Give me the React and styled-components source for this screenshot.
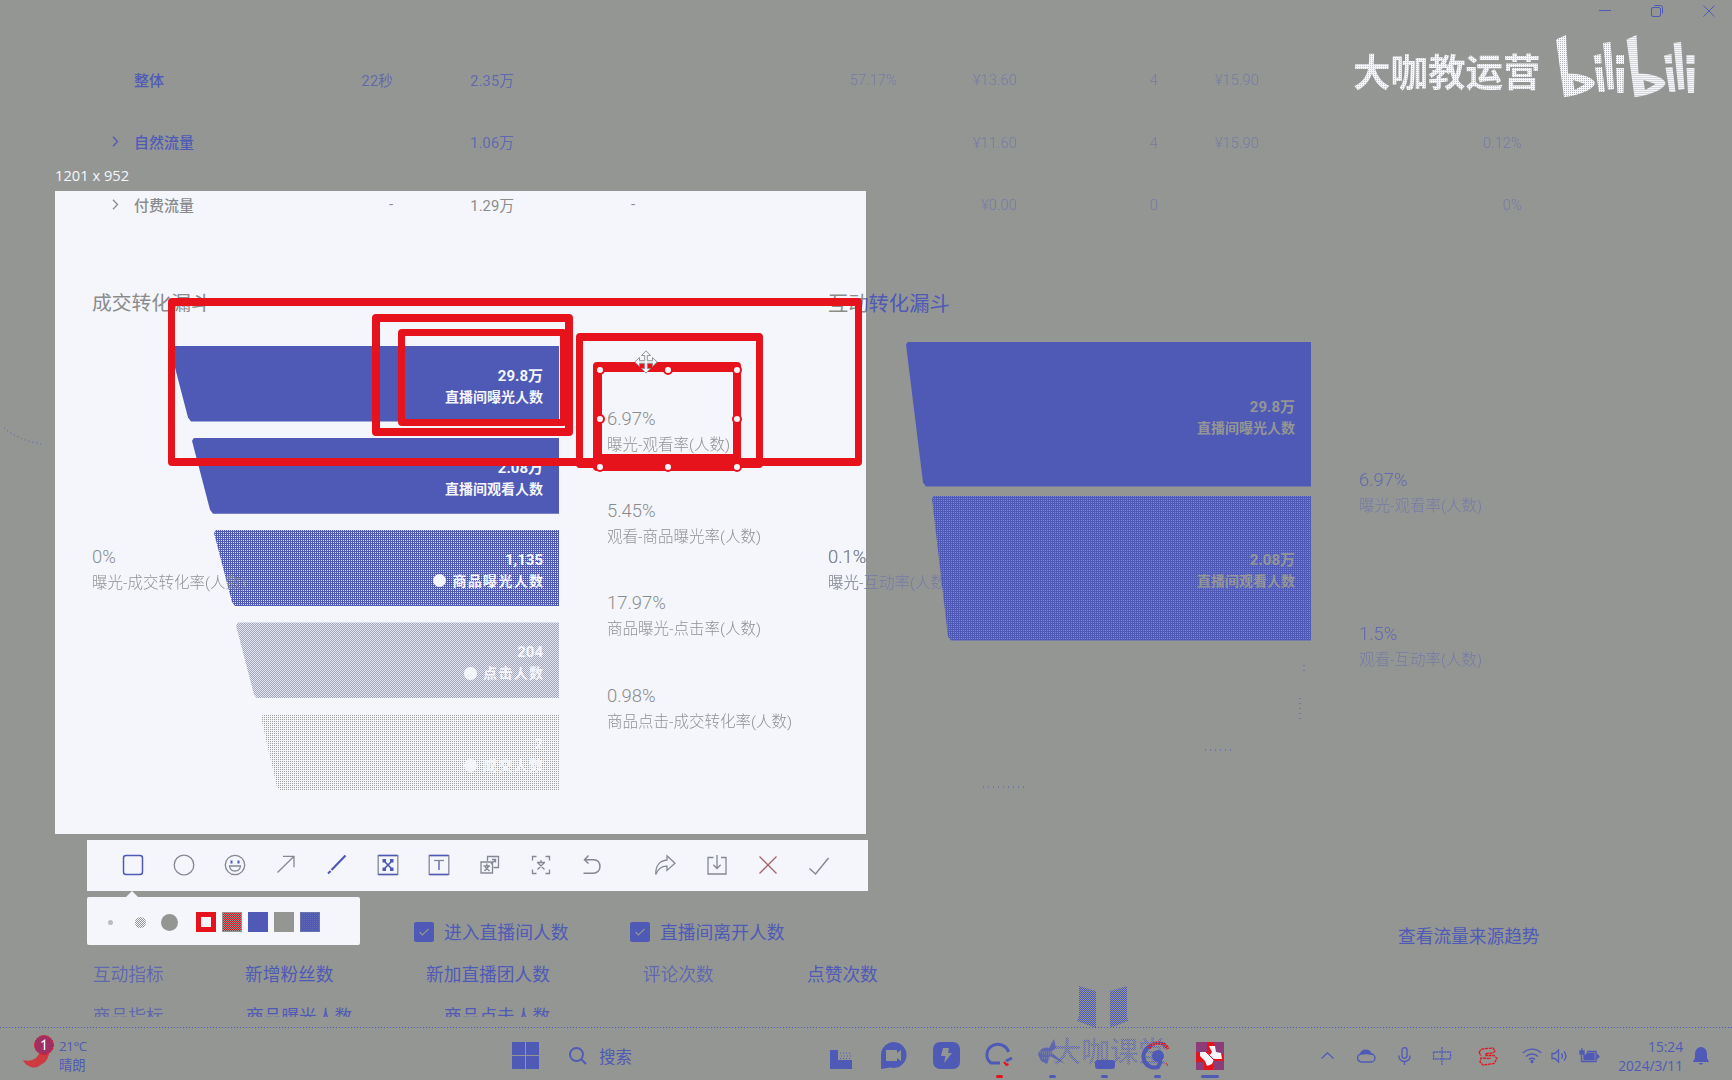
import React from 'react';
import styled, { createGlobalStyle, ThemeProvider } from 'styled-components';

const GRAY = '#949694';
const BLUE = '#4f5ab6';
const PAPER = '#f5f6fc';
const RED = '#e6131d';

const dots = (color, size = '2px 2px', at = '0 0') =>
  `conic-gradient(${color} 25%, transparent 0) ${at} / ${size}`;
const checker = (color, size = '2px 2px') =>
  `conic-gradient(${color} 25%, transparent 0 50%, ${color} 0 75%, transparent 0) 0 0 / ${size}`;

const Global = createGlobalStyle`
  * { box-sizing: border-box; }
  body { margin: 0; background: ${GRAY}; overflow: hidden; }
  svg { display: block; flex: none; overflow: visible; }
`;

const dimTheme = {
  bg: GRAY, text: BLUE, barText: GRAY, faint: 0.45, weak: 0.75,
  fills: { solid: BLUE, fine: `${dots('#858a9a')}, ${BLUE}` },
};
const litTheme = {
  bg: PAPER, text: '#8a8c8c', barText: PAPER, faint: 0.95, weak: 1,
  fills: {
    solid: BLUE,
    coarse: `${dots('#dcdef2')}, ${BLUE}`,
    haze: `${checker('#a3a6b6')}, #e3e5f3`,
    pale: `${dots('#9d9f9e')}, ${PAPER}`,
  },
};

const Screen = styled.div`
  position: relative;
  width: 1732px;
  height: 1080px;
  overflow: hidden;
  display: grid;
  grid-template-rows: 1027px 53px;
  background: ${GRAY};
  color: ${BLUE};
  font-family: Roboto, 'Noto Sans CJK SC', sans-serif;
  white-space: nowrap;
`;

/* ---------- report page ---------- */

const Report = styled.div`
  width: 1732px;
  height: 1017px;
  overflow: hidden;
  background: ${p => p.theme.bg};
  color: ${p => p.theme.text};
`;
const TitleBar = styled.header`
  height: 48px;
  display: flex;
  justify-content: flex-end;
  gap: 40px;
  padding: 5px 17px 0 0;
`;
const TableRow = styled.div`
  height: 62.5px;
  padding-left: 112px;
  display: grid;
  grid-template-columns: 200px 81px 121px 121px 262px 120px 141px 101px 263px;
  align-items: center;
`;
const NameCell = styled.div`
  display: flex;
  align-items: center;
  font-size: 15px;
  font-weight: 500;
`;
const ChevronSlot = styled.span`
  width: 22px;
`;
const ValueCell = styled.div`
  text-align: right;
  font-size: 14.8px;
  font-weight: ${p => (p.$faint ? 300 : 400)};
  padding-top: ${p => (p.$faint ? 2 : 0)}px;
  opacity: ${p => (p.$faint ? p.theme.faint : p.theme.weak)};
`;

const Funnels = styled.section`
  margin-top: 56px;
  padding-left: 92px;
  display: grid;
  grid-template-columns: 736px 1fr;
`;
const FunnelTitle = styled.h2`
  margin: 0;
  height: 24px;
  line-height: 24px;
  font-size: ${p => p.$size}px;
  font-weight: 400;
`;
const FunnelBody = styled.div`
  margin-top: 30px;
  height: 448px;
  display: grid;
  grid-template-columns: 78px ${p => p.$bars}px 1fr;
`;
const Total = styled.div`
  align-self: center;
  width: 0;
  position: relative;
  z-index: 1;
`;
const Bars = styled.div`
  display: flex;
  flex-direction: column;
  align-items: flex-end;
  gap: ${p => p.$gap}px;
  margin-top: ${p => p.$lift || 0}px;
`;
const Bar = styled.div`
  flex: none;
  width: ${p => p.$w}px;
  height: ${p => p.$h}px;
  padding-right: 16px;
  padding-top: ${p => p.$shift || 0}px;
  display: flex;
  flex-direction: column;
  justify-content: center;
  align-items: flex-end;
  color: ${p => p.theme.barText};
  background: ${p => p.theme.fills[p.$fill]};
  clip-path: polygon(0 3px, 2px 0, 100% 0, 100% 100%, ${p => p.$cut + 1}px 100%, ${p => p.$cut - 2}px calc(100% - 4px));
`;
const BarValue = styled.div`
  font-size: 15px;
  line-height: 21px;
  font-weight: 700;
`;
const BarName = styled.div`
  display: flex;
  align-items: center;
  font-size: 14px;
  line-height: 20px;
  font-weight: 700;
  letter-spacing: ${p => (p.$mark ? '1.3px' : '0')};
  margin-right: ${p => (p.$mark ? '-1.3px' : '0')};
`;
const Mark = styled.i`
  width: 13px;
  height: 13px;
  margin-right: 6px;
  border-radius: 50%;
  background: currentColor;
`;
const Rates = styled.div`
  padding: ${p => p.$top}px 0 0 48px;
  display: flex;
  flex-direction: column;
`;
const Rate = styled.div`
  height: ${p => p.$h}px;
  display: flex;
  flex-direction: column;
  justify-content: center;
`;
const RateValue = styled.div`
  font-size: 18.4px;
  line-height: 26px;
  font-weight: 300;
  opacity: ${p => p.theme.weak};
`;
const RateName = styled.div`
  font-size: 15.5px;
  line-height: 26px;
  font-weight: 300;
  opacity: ${p => p.theme.faint};
`;

const Options = styled.div`
  margin-top: 121px;
  height: 30px;
  padding-left: 414px;
  display: grid;
  grid-template-columns: 216px 768px 1fr;
  align-items: center;
  font-size: 17.8px;
  line-height: 24px;
`;
const Option = styled.label`
  display: flex;
  align-items: center;
  gap: 10px;
`;
const OptionText = styled.span`
  padding-top: 2px;
`;
const Check = styled.span`
  width: 20px;
  height: 20px;
  border-radius: 2px;
  background: ${BLUE};
  display: grid;
  place-items: center;
`;
const TrendLink = styled.a`
  padding-top: 10px;
  font-size: 17.7px;
`;
const Metrics = styled.div`
  height: ${p => p.$h}px;
  margin-top: ${p => p.$top || 0}px;
  padding-left: 93px;
  display: grid;
  grid-template-columns: 152px 181px 217px 164px 1fr;
  align-items: center;
  font-size: 17.7px;
`;
const Metric = styled.span`
  padding-left: ${p => p.$indent || 0}px;
  opacity: ${p => (p.$soft ? 0.75 : 1)};
`;

const Chevron = () => (
  <svg width="7" height="11" viewBox="0 0 7 11" fill="none" stroke="currentColor" strokeWidth="1.3">
    <path d="M1 .8 5.5 5.5 1 10.2" />
  </svg>
);

const dimRows = [
  { name: '整体', cells: ['22秒', '2.35万', '', '57.17%', '¥13.60', '4', '¥15.90', ''] },
  { name: '自然流量', open: true, cells: ['', '1.06万', '', '', '¥11.60', '4', '¥15.90', '0.12%'] },
  { cells: ['', '', '', '', '¥0.00', '0', '', '0%'] },
];
const litRows = [
  { cells: [] },
  { cells: [] },
  { name: '付费流量', open: true, cells: ['-', '1.29万', '-'] },
];

const dealBars = [
  { w: 389, cut: 20, fill: 'solid', value: '29.8万', name: '直播间曝光人数', shift: 6 },
  { w: 367, cut: 20, fill: 'solid', value: '2.08万', name: '直播间观看人数', shift: 6 },
  { w: 345, cut: 20, fill: 'coarse', value: '1,135', name: '商品曝光人数', mark: true, shift: 4 },
  { w: 323, cut: 20, fill: 'haze', value: '204', name: '点击人数', mark: true, shift: 5 },
  { w: 298, cut: 18, fill: 'pale', value: '2', name: '成交人数', mark: true, shift: 4 },
];
const dealRates = [
  ['6.97%', '曝光-观看率(人数)'],
  ['5.45%', '观看-商品曝光率(人数)'],
  ['17.97%', '商品曝光-点击率(人数)'],
  ['0.98%', '商品点击-成交转化率(人数)'],
];
const talkBars = [
  { w: 405, cut: 19, fill: 'solid', value: '29.8万', name: '直播间曝光人数', shift: 6 },
  { w: 379, cut: 18, fill: 'fine', value: '2.08万', name: '直播间观看人数', shift: 4 },
];
const talkRates = [
  ['6.97%', '曝光-观看率(人数)'],
  ['1.5%', '观看-互动率(人数)'],
];

function FunnelBars({ items, h, gap, lift }) {
  return (
    <Bars $gap={gap} $lift={lift}>
      {items.map(b => (
        <Bar key={b.name} $w={b.w} $h={h} $cut={b.cut} $fill={b.fill} $shift={b.shift}>
          <BarValue>{b.value}</BarValue>
          <BarName $mark={b.mark}>{b.mark && <Mark />}{b.name}</BarName>
        </Bar>
      ))}
    </Bars>
  );
}

function FunnelRates({ items, h, top }) {
  return (
    <Rates $top={top}>
      {items.map(([v, n]) => (
        <Rate key={n} $h={h}><RateValue>{v}</RateValue><RateName>{n}</RateName></Rate>
      ))}
    </Rates>
  );
}

function TrafficTable({ rows }) {
  return rows.map((r, n) => (
    <TableRow key={n}>
      <NameCell><ChevronSlot>{r.open && <Chevron />}</ChevronSlot>{r.name}</NameCell>
      {r.cells.map((c, i) => <ValueCell key={i} $faint={i > 2}>{c}</ValueCell>)}
    </TableRow>
  ));
}

const Tick = () => (
  <svg width="10" height="8" viewBox="0 0 10 8" fill="none" stroke={GRAY} strokeWidth="1.2"><path d="M.5 4 3.5 7 9.5.8" /></svg>
);

function TalkFunnel({ children }) {
  return (
    <div>
      <FunnelTitle $size={20.3}>互动转化漏斗</FunnelTitle>
      <FunnelBody $bars={405}>
        <Total><RateValue>0.1%</RateValue><RateName>曝光-互动率(人数)</RateName></Total>
        {children}
      </FunnelBody>
    </div>
  );
}

function DimmedReport() {
  return (
    <Report>
      <TitleBar>
        <svg width="12" height="12" fill="none" stroke="currentColor"><path d="M0 5.5h12" /></svg>
        <svg width="12" height="12" fill="none" stroke="currentColor">
          <rect x=".5" y="2.5" width="9" height="9" rx="1.5" /><path d="M3.5 .5h6q2 0 2 2v6" />
        </svg>
        <svg width="12" height="12" fill="none" stroke="currentColor"><path d="M.5.5l11 11M11.5.5l-11 11" /></svg>
      </TitleBar>
      <TrafficTable rows={dimRows} />
      <Funnels>
        <div />
        <TalkFunnel>
          <FunnelBars items={talkBars} h={145} gap={9} lift={-4} />
          <FunnelRates items={talkRates} h={154} top={70} />
        </TalkFunnel>
      </Funnels>
      <Options>
        <Option><Check><Tick /></Check><OptionText>进入直播间人数</OptionText></Option>
        <Option><Check><Tick /></Check><OptionText>直播间离开人数</OptionText></Option>
        <TrendLink>查看流量来源趋势</TrendLink>
      </Options>
      <Metrics $top={6} $h={44}>
        <Metric $soft>互动指标</Metric>
        <Metric>新增粉丝数</Metric>
        <Metric>新加直播团人数</Metric>
        <Metric $soft>评论次数</Metric>
        <Metric>点赞次数</Metric>
      </Metrics>
      <Metrics $h={40}>
        <Metric $soft>商品指标</Metric>
        <Metric $indent={1}>商品曝光人数</Metric>
        <Metric $indent={18}>商品点击人数</Metric>
      </Metrics>
    </Report>
  );
}

function SelectedReport() {
  return (
    <Report>
      <TitleBar />
      <TrafficTable rows={litRows} />
      <Funnels>
        <div>
          <FunnelTitle $size={19.8}>成交转化漏斗</FunnelTitle>
          <FunnelBody $bars={389}>
            <Total><RateValue>0%</RateValue><RateName>曝光-成交转化率(人数)</RateName></Total>
            <FunnelBars items={dealBars} h={76} gap={16.3} />
            <FunnelRates items={dealRates} h={92.3} top={40} />
          </FunnelBody>
        </div>
        <TalkFunnel />
      </Funnels>
    </Report>
  );
}

/* ---------- capture overlay ---------- */

const SizeLabel = styled.div`
  position: absolute;
  left: 55px;
  top: 164px;
  font: 14.7px/22px 'Open Sans', sans-serif;
  color: ${PAPER};
`;
const Selection = styled.div`
  position: absolute;
  left: 55px;
  top: 191px;
  width: 811px;
  height: 643px;
  overflow: hidden;
`;
const SelectionShift = styled.div`
  margin: -191px 0 0 -55px;
`;
const RedBox = styled.div`
  position: absolute;
  left: ${p => p.$x}px;
  top: ${p => p.$y}px;
  width: ${p => p.$w}px;
  height: ${p => p.$h}px;
  border: solid ${RED};
  border-width: ${p => p.$b};
  border-radius: 4px;
`;
const Handle = styled.i`
  position: absolute;
  left: ${p => p.$x - 5}px;
  top: ${p => p.$y - 5}px;
  width: 10px;
  height: 10px;
  border: 2px solid ${RED};
  border-radius: 50%;
  background: ${PAPER};
`;
const CursorSlot = styled.div`
  position: absolute;
  left: 634px;
  top: 350px;
`;
const boxes = [
  { x: 168, y: 298, w: 694, h: 168, b: '8px 7px' },
  { x: 372, y: 314, w: 201, h: 122, b: '8px' },
  { x: 398, y: 329, w: 169, h: 97, b: '7px' },
  { x: 576, y: 333, w: 187, h: 135, b: '8px 7.5px 10px' },
  { x: 593, y: 362, w: 148, h: 109, b: '10px 8px 17px 9px' },
];
const handles = [600, 668, 737].flatMap(x => [370, 419, 467].map(y => [x, y]))
  .filter(([x, y]) => !(x === 668 && y === 419));

const MoveCursor = () => (
  <svg width="24" height="24" viewBox="0 0 24 24" fill={PAPER} stroke={GRAY} strokeWidth="1">
    <path d="M12 .8 16.5 5.5H13.3V10.7H18.5V7.5L23.2 12 18.5 16.5V13.3H13.3V18.5H16.5L12 23.2 7.5 18.5H10.7V13.3H5.5V16.5L.8 12 5.5 7.5V10.7H10.7V5.5H7.5Z" />
  </svg>
);

const Toolbar = styled.div`
  position: absolute;
  left: 87px;
  top: 840px;
  width: 781px;
  height: 51px;
  padding: 0 0 2px 20px;
  display: flex;
  align-items: center;
  background: ${PAPER};
`;
const Tool = styled.button`
  width: 51.1px;
  height: 49px;
  margin-left: ${p => p.$space || 0}px;
  padding: 0;
  border: 0;
  background: none;
  display: grid;
  place-items: center;
  color: ${p => p.$color || '#858893'};
`;
const ToolSvg = ({ children }) => (
  <svg width="22" height="22" viewBox="0 0 22 22" fill="none" stroke="currentColor" strokeWidth="1.3">{children}</svg>
);

const tools = [
  { id: 'rect', color: BLUE, art: <rect x="1.5" y="1.5" width="19" height="19" rx="2.5" strokeWidth="1.5" /> },
  { id: 'circle', art: <circle cx="11" cy="11" r="9.8" /> },
  { id: 'smile', art: <><circle cx="11" cy="11" r="9.7" /><path d="M5.5 12h11c-.4 3.4-2.6 5-5.5 5s-5.100-1.600-5.500-5z" /><path d="M7.500 6.500v3M14.500 6.500v3" stroke={BLUE} strokeWidth="2" /></> },
  { id: 'arrow', art: <path d="M2.500 18.500 18.800 2.500M8 2.300h11v11" /> },
  { id: 'brush', color: BLUE, art: <><path d="M5.500 16 19.500 1.500" strokeWidth="2.200" /><path d="M2 19.500 4.600 17" strokeWidth="2" /></> },
  { id: 'mosaic', art: <><rect x="1.200" y="1.500" width="19.600" height="19" /><path d="M1.500 1.500h19M1.500 20.500h19" stroke={BLUE} /><path fill={BLUE} stroke="none" d="M5.500 5h3.500v3.500h-3.500zM13 5h3.500v3.500H13zM5.500 13.500h3.500V17h-3.500zM13 13.500h3.500V17H13z" /><path d="M8 8l6 6M14 8l-6 6" stroke={BLUE} strokeWidth="1.700" /></> },
  { id: 'text', art: <><rect x="1.200" y="1.500" width="19.600" height="19" /><path d="M1.500 1.500h19M1.500 20.500h19M11 7v9" stroke={BLUE} /><path d="M6 6.500h10" /></> },
  { id: 'translate', art: <><path d="M8.500 7V2.500h11v11h-5M2 8h11.500v11H2zM7.800 9.500V12M4.500 12h6.500M10 12l-4.500 5M6 13l4.500 4M13 5.500h3.500v3M12 10l4-3.500" /></> },
  { id: 'ocr', art: <><path d="M2.500 6.500v-4h4M15.500 2.500h4v4M19.500 15.500v4h-4M6.500 19.500h-4v-4M11 6v2.500M7 8.500h8M14 9l-6.500 6.500M8 9l6.500 6.500" /></> },
  { id: 'undo', art: <path d="M7.500 1.500 3.500 5.700 7.500 9.500M3.500 5.700h9.300c8.200 0 8.200 13.500 0 13.500H2.500" strokeWidth="1.500" /> },
  { id: 'share', space: 22, art: <path d="M13 1.800 21 9.200l-8 7.200v-4.200C8.500 12 4 15 1.700 20.500 1.500 11 6.500 6.500 13 6z" /> },
  { id: 'save', art: <path d="M7.500 3.500h-5.500v16.500h18V3.500h-5M11 1v13.500M7.300 10.800 11 14.500l3.700-3.700" /> },
  { id: 'cancel', color: '#a5656b', art: <path d="M2.500 2.500l17 17M19.500 2.500l-17 17" /> },
  { id: 'done', art: <path d="M1.500 14.500 7.500 20 20.500 4" strokeWidth="1.400" /> },
];

const StylePanel = styled.div`
  position: absolute;
  left: 87px;
  top: 897px;
  width: 273px;
  height: 48px;
  padding: 2px 0 0 21px;
  border-radius: 2px;
  background: ${PAPER};
  display: flex;
  align-items: center;
  &::before {
    content: '';
    position: absolute;
    left: 39px;
    top: -6px;
    border: 6px solid transparent;
    border-top: 0;
    border-bottom-color: ${PAPER};
  }
`;
const Sizes = styled.div`
  width: 88px;
  height: 20px;
  display: grid;
  grid-template-columns: 26.5px 26.5px 17px;
  align-items: center;
`;
const Dot = styled.i`
  width: ${p => p.$d}px;
  height: ${p => p.$d}px;
  border-radius: 50%;
  background: ${p => p.$bg};
`;
const Swatches = styled.div`
  display: flex;
  gap: 6.2px;
`;
const Swatch = styled.i`
  width: 19.8px;
  height: 20px;
  background: ${p => p.$bg};
  border: ${p => p.$edge || 'none'};
`;

/* ---------- watermarks ---------- */

const Brand = styled.div`
  position: absolute;
  left: 1353px;
  top: 25px;
  height: 85px;
  display: flex;
  align-items: center;
`;
const BrandName = styled.div`
  width: 187px;
  padding-top: 5px;
  font: 700 37.5px/50px 'Noto Sans CJK SC', sans-serif;
  color: transparent;
  background: ${dots('#c9cbcd')}, ${PAPER};
  -webkit-background-clip: text;
  background-clip: text;
`;
const BiliHalf = ({ x }) => (
  <g transform={`translate(${x} 0)`}>
    <path fillRule="evenodd" d="M16 14.5 26 10 28 48.5C43 48.5 54 53 55 58 54 64 40 70.5 24 72ZM33 55 34.5 65 45 59Z" />
    <path d="M53.5 30.5 61 29 61.5 38.5 55 38.8ZM55 42.5 62 42 65 67 59 67ZM63 18 70.5 17 74 64 68 65ZM76 30 84 30 84 39 76 39ZM76 43 84 43 83.5 68 77.5 68Z" />
  </g>
);
const BiliLogo = () => (
  <svg width="170" height="85" viewBox="0 0 170 85">
    <defs>
      <pattern id="grain" width="2" height="2" patternUnits="userSpaceOnUse">
        <rect width="2" height="2" fill={PAPER} /><rect width="1" height="1" fill="#b5b7b8" />
      </pattern>
    </defs>
    <g fill="url(#grain)"><BiliHalf x={0} /><BiliHalf x={70.5} /></g>
  </svg>
);
const Course = styled.div`
  position: absolute;
  left: 1053px;
  top: 985px;
  width: 114px;
  display: flex;
  flex-direction: column;
  gap: 3px;
`;
const BookSlot = styled.div`
  padding-left: 23px;
`;
const CourseName = styled.div`
  font: 500 28.5px/36px 'Noto Sans CJK SC', sans-serif;
  color: transparent;
  background: ${checker(BLUE)};
  -webkit-background-clip: text;
  background-clip: text;
  opacity: 0.75;
`;
const Book = () => (
  <svg width="54" height="44" viewBox="0 0 54 44">
    <defs>
      <pattern id="weave" width="2" height="2" patternUnits="userSpaceOnUse">
        <rect width="1" height="1" fill={BLUE} /><rect x="1" y="1" width="1" height="1" fill={BLUE} />
      </pattern>
    </defs>
    <path fill="url(#weave)" d="M3 1 20 6V43L1 36 3 31ZM51 1 34 6V43L52 36 51 31Z" />
  </svg>
);
const Specks = styled.svg`
  position: absolute;
  left: 0;
  top: 0;
  pointer-events: none;
`;

/* ---------- taskbar ---------- */

const Taskbar = styled.footer`
  display: grid;
  grid-template-columns: 512px 303px 421px 71px 1fr;
  align-items: center;
  padding-top: 4px;
  background: repeating-linear-gradient(90deg, ${BLUE} 0 1px, transparent 1px 3px) 0 0 / 100% 1px no-repeat;
`;
const Weather = styled.div`
  padding-left: 22px;
  display: flex;
  align-items: center;
  gap: 4px;
`;
const WeatherIcon = styled.svg`
  margin-top: -6px;
`;
const WeatherText = styled.div`
  font: 13.3px/19px 'Open Sans', 'Noto Sans CJK SC', sans-serif;
  letter-spacing: ${p => (p.$tight ? '-0.4px' : 0)};
`;
const Launch = styled.div`
  display: flex;
  align-items: center;
`;
const SearchIcon = styled.svg`
  margin: 0 12px 0 30px;
`;
const SearchText = styled.span`
  font: 16.5px/24px 'Noto Sans CJK SC', sans-serif;
`;
const Apps = styled.div`
  height: 49px;
  display: grid;
  grid-template-columns: repeat(8, 52.7px);
`;
const AppSlot = styled.div`
  display: flex;
  flex-direction: column;
  align-items: center;
  justify-content: space-between;
  padding: 11px 0 2px;
`;
const Running = styled.i`
  height: 3px;
  width: ${p => p.$w}px;
  border-radius: 2px;
  background: ${p => p.$c || BLUE};
`;
const Tray = styled.div`
  display: grid;
  grid-template-columns: 40px 38px 38px 38px 54px 34px 20px 40px 74px 36px;
  align-items: center;
  justify-items: center;
`;
const Clock = styled.div`
  justify-self: end;
  text-align: right;
  font: 13.7px/19px 'Open Sans', sans-serif;
`;
const Line = ({ w = 20, h = 20, children }) => (
  <svg width={w} height={h} viewBox={`0 0 ${w} ${h}`} fill="none" stroke="currentColor" strokeWidth="1.3">{children}</svg>
);

const apps = [
  { run: 0, art: <svg width="22" height="27"><path fill={BLUE} d="M0 8h8v10h14v9H0z" /><path stroke={BLUE} strokeDasharray="1 2" d="M10 11h11M11 14h11M10 16.5h11" /></svg> },
  { run: 0, art: <svg width="26" height="27"><path fill={BLUE} fillRule="evenodd" d="M13 0a13 13 0 1 1-4 25.5L0 27V13A13 13 0 0 1 13 0zM5 8v11h11v-3l4 3V8l-4 3V8z" /></svg> },
  { run: 0, art: <svg width="27" height="27"><rect width="27" height="27" rx="7" fill={BLUE} /><path fill={GRAY} d="M10 6h6l-1 5h4l-8 10 1.5-7H8z" /></svg> },
  { run: 7, c: RED, art: <svg width="28" height="27" fill="none"><path stroke={BLUE} strokeWidth="3" d="M23.5 10A11 10.5 0 1 0 6 21H15M21 19l6-3" /><path stroke={RED} strokeWidth="2" d="M19 20l2.500 3 2-1" /></svg> },
  { run: 7, art: <svg width="28" height="27"><path fill={BLUE} opacity=".8" d="M0 12Q4 4 11 6L16-3 18 6 13 10 27 22 12 14 9 22 3 19Q1 15 0 12z" /><path stroke={GRAY} strokeDasharray="1 1" d="M2 10h18M4 12h12M4 16h8" /></svg> },
  { run: 7, art: <svg width="20" height="27"><rect y="18" width="20" height="9" rx="3" fill={BLUE} /></svg> },
  { run: 7, art: <svg width="27" height="27" fill="none"><path stroke={BLUE} strokeWidth="4" d="M7 4A11 11 0 0 0 14 25l3-6" /><path stroke={RED} strokeWidth="3.5" strokeDasharray="2 .7" d="M5 6A11 11 0 0 1 24 7" /><circle cx="14" cy="14" r="6" fill={BLUE} /><path stroke={RED} d="M22 21l2 3" /></svg> },
  { run: 18, art: <svg width="28" height="28"><rect width="28" height="28" fill={RED} /><path fill={BLUE} opacity=".6" d="M0 0h11v10H0zM17 19h11v9h-11zM18 0h10v12h-8zM0 20h8v8H0z" /><path fill={PAPER} d="M13 4h6l1 6 5 1 1 6-8 0-2 5-5 2-2-5-5-5 0-4 6 0 4 3 2-3z" /><path stroke={RED} d="M10 10l8 8" /></svg> },
];

export default function App() {
  return (
    <Screen>
      <Global />
      <ThemeProvider theme={dimTheme}><DimmedReport /></ThemeProvider>

      <Taskbar>
        <Weather>
          <WeatherIcon width="33" height="34">
            <path fill={RED} opacity=".7" d="M1 24q8 2 13-2l3-4 10 0q-2 8-7 10-6 5-11 3-6-2-8-7z" />
            <circle cx="22" cy="9" r="9.5" fill="#a02f63" stroke={RED} strokeDasharray="2 1" />
            <path d="M19.5 6.5 22.5 4.5V14" fill="none" stroke={PAPER} strokeWidth="1.5" />
          </WeatherIcon>
          <div><WeatherText $tight>21°C</WeatherText><WeatherText>晴朗</WeatherText></div>
        </Weather>
        <Launch>
          <svg width="27" height="27" fill={BLUE}><path d="M0 0h13v13H0zM14 0h13v13H14zM0 14h13v13H0zM14 14h13v13H14z" /></svg>
          <SearchIcon width="18" height="18" fill="none" stroke={BLUE} strokeWidth="1.9">
            <circle cx="7.5" cy="7.5" r="6.5" /><path d="M12 12l5 5" />
          </SearchIcon>
          <SearchText>搜索</SearchText>
        </Launch>
        <Apps>
          {apps.map((a, i) => (
            <AppSlot key={i}>{a.art}{a.run > 0 && <Running $w={a.run} $c={a.c} />}</AppSlot>
          ))}
        </Apps>
        <span />
        <Tray>
          <Line w={13} h={7}><path d="M.5 6.5 6.5.8l6 5.7" /></Line>
          <Line w={20} h={14}><path d="M5 13a4 4 0 0 1-.5-7.800A5.500 5.500 0 0 1 15 5a4 4 0 0 1 0 8z" /><path fill="currentColor" d="M5 5a5.500 5.500 0 0 1 10 0q-5-1-10 0z" /></Line>
          <Line w={13} h={18}><rect x="4" y=".7" width="5" height="10.5" rx="2.5" /><path d="M1 8.5v1a5.500 5 0 0 0 11 0v-1M6.500 14.500V18" /></Line>
          <Line w={20} h={18}><path strokeDasharray="2 .7" d="M1.5 5h17v7h-17zM10 0v18" /></Line>
          <svg width="20" height="18" fill="none" stroke={RED} strokeWidth="1.3"><path d="M1 5 4 2l11-1 2 3-2 2-7 .5 0 2 8 0 3 3-3 5-11 1.500-3-3 1-4 10 .5M1 5l2 4" strokeDasharray="3 .7" /></svg>
          <Line w={20} h={15}><path d="M.8 5a13 13 0 0 1 18.400 0M4 8.500a8.500 8.500 0 0 1 12 0M7 11.500a4.200 4.200 0 0 1 6 0" /><circle cx="10" cy="13.5" r="1" fill="currentColor" /></Line>
          <Line w={17} h={14}><path d="M1 4.500h3L7.500 1v12L4 9.500H1zM10.500 4.500q2 2.500 0 5M13 2.500q4 4.500 0 9" /></Line>
          <Line w={20} h={16}><path d="M8 3.500h9v10H2.500V7" /><path fill="currentColor" d="M5 7.500h2l1-2h7v6H5zM18 6.500l2 2-2 2zM3 0v3H1v3h4V3H3z" /></Line>
          <Clock>15:24<br />2024/3/11</Clock>
          <svg width="16" height="18" fill={BLUE}><path d="M8 0a6 6.500 0 0 1 6 6.500V11l2 4H0l2-4V6.500A6 6.500 0 0 1 8 0zM5.500 16h5L8 18z" /></svg>
        </Tray>
      </Taskbar>

      <SizeLabel>1201 x 952</SizeLabel>
      <Selection>
        <SelectionShift><ThemeProvider theme={litTheme}><SelectedReport /></ThemeProvider></SelectionShift>
      </Selection>
      {boxes.map((b, i) => <RedBox key={i} $x={b.x} $y={b.y} $w={b.w} $h={b.h} $b={b.b} />)}
      {handles.map(([x, y]) => <Handle key={`${x}-${y}`} $x={x} $y={y} />)}
      <CursorSlot><MoveCursor /></CursorSlot>

      <Toolbar>
        {tools.map(t => (
          <Tool key={t.id} $color={t.color} $space={t.space}><ToolSvg>{t.art}</ToolSvg></Tool>
        ))}
      </Toolbar>
      <StylePanel>
        <Sizes>
          <Dot $d={5} $bg="#b9bbbc" />
          <Dot $d={11} $bg={`${checker(GRAY)}, ${PAPER}`} />
          <Dot $d={17} $bg={GRAY} />
        </Sizes>
        <Swatches>
          <Swatch $bg={PAPER} $edge={`5px solid ${RED}`} />
          <Swatch $bg={`${checker(RED)}, ${GRAY}`} $edge={`1px solid ${GRAY}`} />
          <Swatch $bg={BLUE} />
          <Swatch $bg={GRAY} />
          <Swatch $bg={`${dots('#6068b2')}, ${BLUE}`} $edge="1px solid #6b73ae" />
        </Swatches>
      </StylePanel>

      <Brand><BrandName>大咖教运营</BrandName><BiliLogo /></Brand>
      <Course><BookSlot><Book /></BookSlot><CourseName>大咖课堂</CourseName></Course>
      <Specks width="1732" height="1080" fill="none" stroke={BLUE} strokeWidth="1">
        <path strokeDasharray="1 3" d="M4 428Q20 441 42 444" />
        <path strokeDasharray="1 4" d="M983 787h44M1205 750h27M1300 698v22M1304 665v6" />
      </Specks>
    </Screen>
  );
}
